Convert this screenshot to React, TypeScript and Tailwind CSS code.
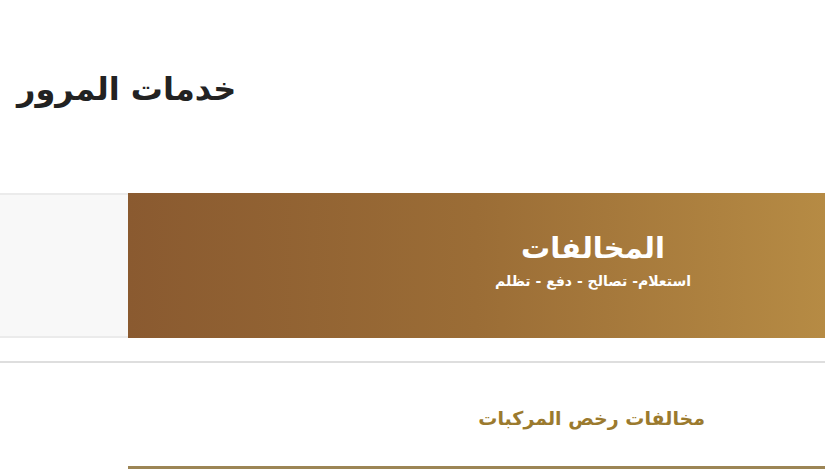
export default function App() {
  return (
    <div
      className="h-[470px] w-[825px] overflow-hidden bg-white"
      style={{ fontFamily: '"DejaVu Sans", "Noto Sans", sans-serif' }}
    >
      <div className="flex h-[193px] flex-col">
        <h1 dir="rtl" className="ml-[17px] mt-[67px] w-fit text-[32px] font-bold leading-[44px] text-[#222]">
          خدمات المرور
        </h1>
      </div>

      <div className="flex h-[145px]">
        <div className="w-[128px] border-y-2 border-[#ebebeb] bg-[#f8f8f8]" />
        <div className="flex flex-1 justify-end bg-gradient-to-r from-[#8a5a30] via-[#9b6d36] to-[#b68b44] pr-[82px]">
          <div dir="rtl" className="flex w-[300px] flex-col items-center pt-[35px] text-white">
            <div className="text-[29px] font-bold leading-[40px]">المخالفات</div>
            <div className="mt-[2px] text-[14px] font-bold leading-[22px]">استعلام- تصالح - دفع - تظلم</div>
          </div>
        </div>
      </div>

      <div className="mt-[23px] h-[2px] w-full bg-[#dedede]" />

      <div className="ml-[128px] flex h-[106px] flex-col border-b-[3px] border-[#9c8555]">
        <div dir="rtl" className="mr-[120px] mt-[41px] text-[19px] font-bold leading-[28px] text-[#9b7a2e]">
          مخالفات رخص المركبات
        </div>
      </div>
    </div>
  )
}
